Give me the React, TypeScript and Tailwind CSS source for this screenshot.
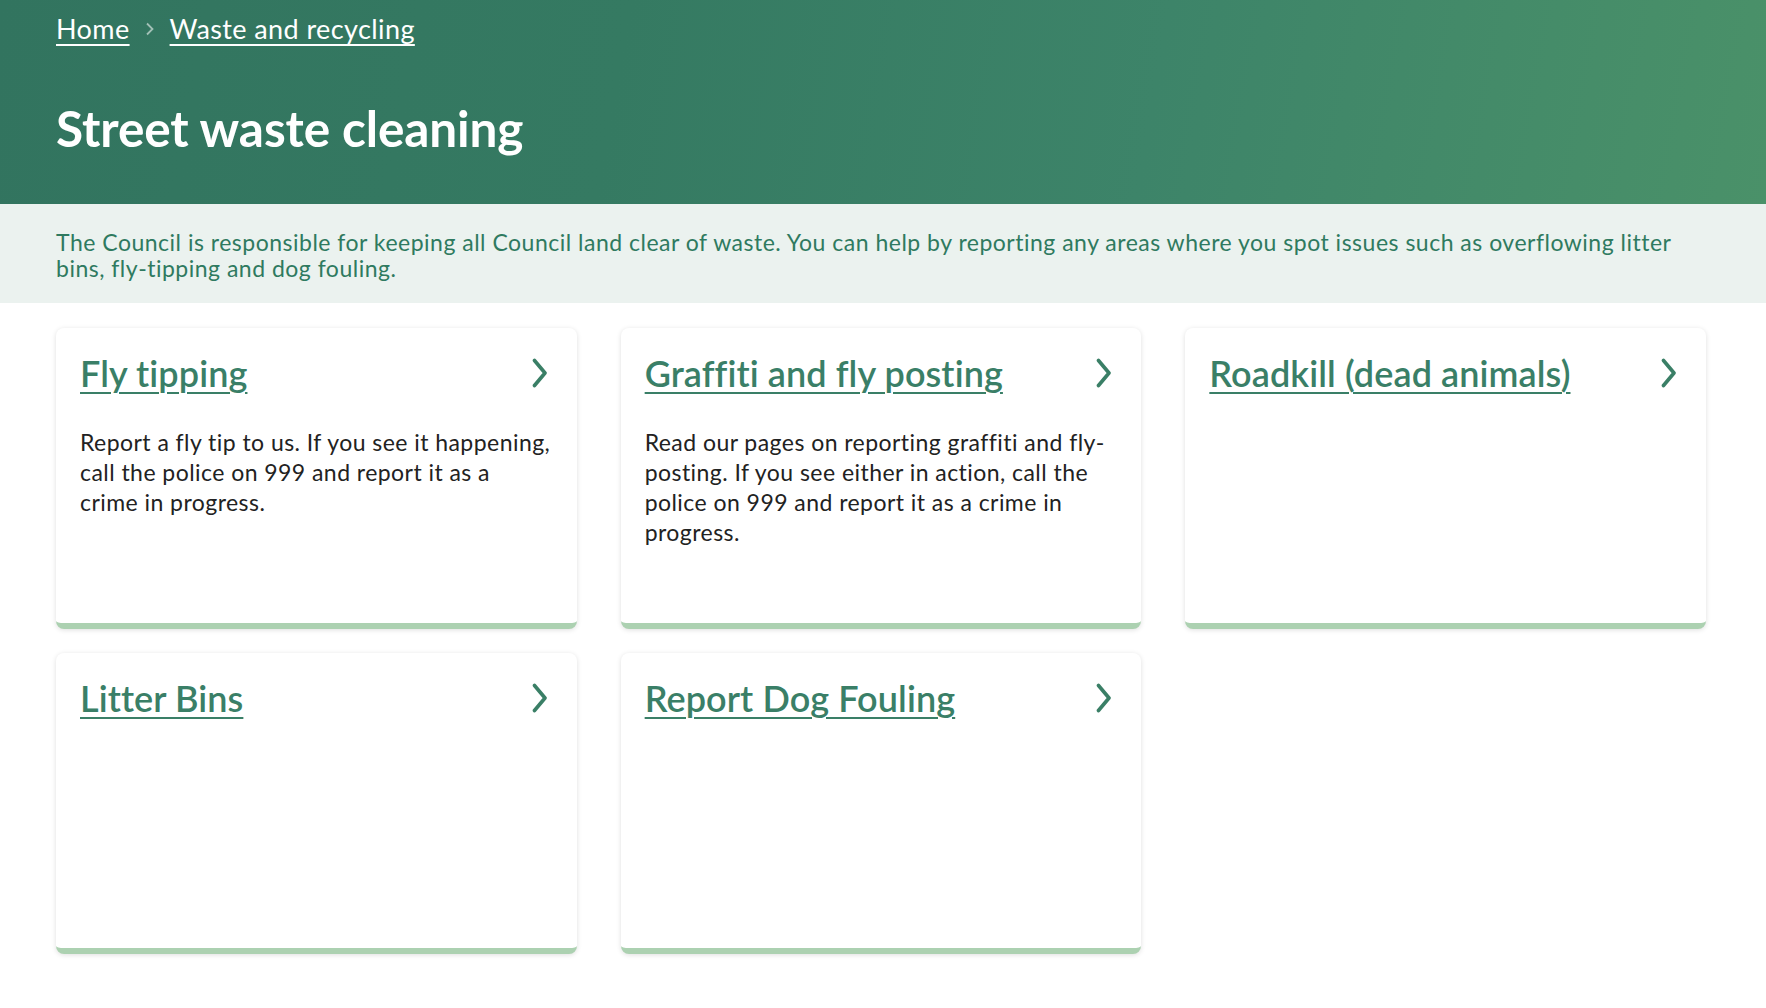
import React from "react";

const cards = [
  {
    title: "Fly tipping",
    text: "Report a fly tip to us. If you see it happening, call the police on 999 and report it as a crime in progress.",
  },
  {
    title: "Graffiti and fly posting",
    text: "Read our pages on reporting graffiti and fly-posting. If you see either in action, call the police on 999 and report it as a crime in progress.",
  },
  { title: "Roadkill (dead animals)", text: "" },
  { title: "Litter Bins", text: "" },
  { title: "Report Dog Fouling", text: "" },
];

function Chevron() {
  return (
    <svg width="16" height="30" viewBox="0 0 16 30" fill="none" className="shrink-0 mt-[6px] mr-[5px]">
      <path d="M2.5 2.5 L13 15 L2.5 27.5" stroke="#3a7f66" strokeWidth="3.6" strokeLinecap="round" strokeLinejoin="round" />
    </svg>
  );
}

export default function App() {
  return (
    <div className="min-h-screen bg-white font-['Lato','Open_Sans',sans-serif] [font-variant-ligatures:none]">
      <header className="h-[204px] bg-[linear-gradient(100deg,#32745f_0%,#357a62_35%,#3d8469_65%,#4a9169_100%)] px-[56px] pt-[13px]">
        <nav className="flex items-center text-[27px] leading-[31px] tracking-[0.4px] text-white">
          <a href="#" className="underline decoration-[1.5px] underline-offset-[5px]">Home</a>
          <svg width="10" height="14" viewBox="0 0 10 14" className="mx-[15px]" fill="none">
            <path d="M2 1.5 L7.5 7 L2 12.5" stroke="rgba(255,255,255,0.55)" strokeWidth="1.8" />
          </svg>
          <a href="#" className="underline decoration-[1.5px] underline-offset-[5px]">Waste and recycling</a>
        </nav>
        <h1 className="mt-[56px] text-[49.5px] font-bold leading-[56px] text-white tracking-[-0.1px]">Street waste cleaning</h1>
      </header>
      <section className="h-[99px] bg-[#ebf2ef] px-[56px] pt-[25px]">
        <p className="max-w-[1650px] text-[23px] leading-[26px] tracking-[0.5px] text-[#2f7a60]">
          The Council is responsible for keeping all Council land clear of waste. You can help by reporting any areas where you spot issues such as overflowing litter bins, fly-tipping and dog fouling.
        </p>
      </section>
      <main className="grid grid-cols-3 gap-x-[44px] gap-y-[24px] pl-[56px] pr-[60px] pt-[25px] pb-[40px]">
        {cards.map((c) => (
          <div
            key={c.title}
            className="h-[301px] rounded-[8px] border-b-[6px] border-[#acd1b1] bg-white px-[24px] pt-[24px] shadow-[0_1px_5px_rgba(0,0,0,0.13)]"
          >
            <div className="flex items-start justify-between">
              <a
                href="#"
                className="text-[36px] font-semibold leading-[42px] tracking-[0.1px] text-[#3a7f67] underline decoration-[2px] underline-offset-[5px]"
              >
                {c.title}
              </a>
              <Chevron />
            </div>
            {c.text && (
              <p className="mt-[33px] pr-[2px] text-[23px] leading-[30px] tracking-[0.45px] text-[#222]">{c.text}</p>
            )}
          </div>
        ))}
      </main>
    </div>
  );
}
